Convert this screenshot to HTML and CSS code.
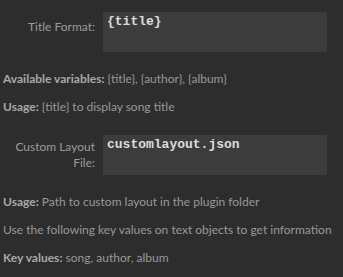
FILE: index.html
```html
<!DOCTYPE html>
<html>
<head>
<meta charset="utf-8">
<link rel="stylesheet" href="styles.css">
</head>
<body>
<div class="settings">
  <div class="row row-first">
    <label class="label label-single">Title Format:</label>
    <div class="field">{title}</div>
  </div>
  <p class="note note-after-field"><b>Available variables:</b> {title}, {author}, {album}</p>
  <p class="note"><b>Usage:</b> {title} to display song title</p>
  <div class="row row-second">
    <label class="label label-double">Custom Layout File:</label>
    <div class="field">customlayout.json</div>
  </div>
  <p class="note note-after-field"><b>Usage:</b> Path to custom layout in the plugin folder</p>
  <p class="note">Use the following key values on text objects to get information</p>
  <p class="note"><b>Key values:</b> song, author, album</p>
</div>
</body>
</html>
```
FILE: styles.css
```css
html, body {
  margin: 0;
  padding: 0;
  background: #2d2d2d;
}
body {
  font-family: Lato, "Open Sans", sans-serif;
  font-size: 12px;
  color: #999999;
}
.settings {
  padding: 12px 3px 0 3px;
}
.row {
  display: flex;
  align-items: flex-start;
  gap: 8px;
}
.label {
  width: 92px;
  text-align: right;
  line-height: 16px;
  color: #999da2;
}
.label-single { padding-top: 7px; }
.label-double { padding-top: 4px; }
.field {
  width: 216px;
  height: 36px;
  padding: 2px 4px;
  background: #3c3c3c;
  font-family: "Liberation Mono", "Courier New", monospace;
  font-weight: bold;
  font-size: 13px;
  color: #dcdcdc;
}
.note {
  margin: 12px 0 0 0;
  line-height: 16px;
  white-space: nowrap;
}
.note b {
  color: #a8a8a8;
  font-weight: 700;
}
.note-after-field { margin-top: 19px; }
.row-second { margin-top: 20px; }
```
